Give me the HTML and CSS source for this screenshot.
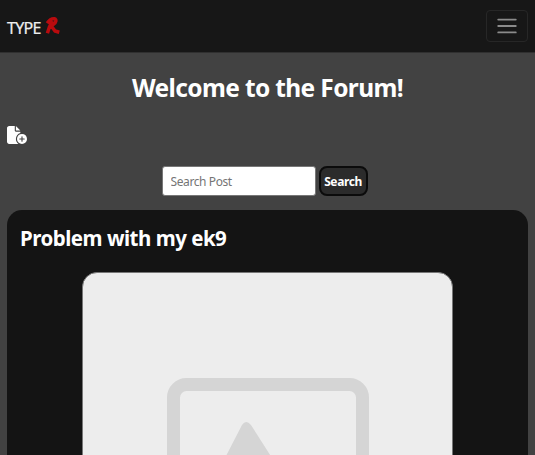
FILE: index.html
```html
<!DOCTYPE html>
<html lang="en">
<head>
<meta charset="utf-8">
<title>Type R Forum</title>
<link rel="stylesheet" href="styles.css">
</head>
<body>
<header class="navbar">
  <a class="brand"><span class="brand-text">TYPE</span>
    <svg class="brand-mark" width="16" height="20" viewBox="0 0 16 20"><path d="M2.200 7.200C4 4.500 7 2.500 9.300 2.700C12 3.200 11 6.600 8.500 8.200L5.500 10M7.400 5L4.400 11L2.400 17.200M6.300 10L10 15L14.300 16.300" fill="none" stroke="#b90b0e" stroke-width="3.500" stroke-linejoin="round"/></svg>
  </a>
  <button class="toggler" aria-label="Menu">
    <svg width="24" height="24" viewBox="0 0 30 30"><path d="M4 7h22M4 15h22M4 23h22" stroke="#8b8b8b" stroke-width="2.200" stroke-linecap="round"/></svg>
  </button>
</header>
<main>
  <h1>Welcome to the Forum!</h1>
  <a class="new-post">
    <svg width="20" height="18" viewBox="0 0 576 512" preserveAspectRatio="none"><path fill="#fff" d="M0 64C0 28.700 28.700 0 64 0H224V128c0 17.700 14.300 32 32 32H384v38.600C310.100 219.500 256 287.400 256 368c0 59.100 29.100 111.300 73.700 143.300c-3.200 .5-6.400 .7-9.700 .7H64c-35.300 0-64-28.700-64-64V64zm384 64H256V0L384 128zm48 96a144 144 0 1 1 0 288 144 144 0 1 1 0-288zm16 80c0-8.800-7.200-16-16-16s-16 7.200-16 16v48H368c-8.800 0-16 7.200-16 16s7.200 16 16 16h48v48c0 8.800 7.200 16 16 16s16-7.200 16-16V384h48c8.800 0 16-7.200 16-16s-7.200-16-16-16H448V304z"/></svg>
  </a>
  <form class="search">
    <input type="text" placeholder="Search Post">
    <button type="button">Search</button>
  </form>
  <article class="post">
    <h2>Problem with my ek9</h2>
    <div class="photo">
      <svg width="202" height="170" viewBox="0 0 202 170"><rect x="6.500" y="6.500" width="189" height="157" rx="13" fill="none" stroke="#d5d5d5" stroke-width="13"/><path d="M28 138L75 47Q79 41 84 47L121 105L132 92L174 138Z" fill="#d5d5d5"/></svg>
    </div>
  </article>
</main>
</body>
</html>
```
FILE: styles.css
```css
* { box-sizing: border-box; }
html, body { height: 100%; overflow: hidden; }
body { margin: 0; background: #424242; color: #fff; font-family: "Noto Sans", "Open Sans", sans-serif; }
.navbar { height: 53px; background: #171717; border-bottom: 1px solid #303030; display: flex; align-items: center; justify-content: space-between; padding: 0 7px; }
.brand { display: flex; align-items: center; gap: 4px; }
.brand-text { font-size: 16px; letter-spacing: -0.7px; color: #eee; padding-top: 3px; -webkit-text-stroke: 0.2px #eee; }
.toggler { width: 42px; height: 32px; padding: 0; border: 1px solid #272727; border-radius: 4px; background: none; display: grid; place-items: center; }
main { height: 402px; padding: 0 7px; overflow: hidden; }
h1 { margin: 17px 0 0; font-size: 24.5px; line-height: 36px; font-weight: 700; text-align: center; letter-spacing: -0.63px; }
.new-post { display: block; height: 19px; margin-top: 20px; }
.new-post svg { display: block; }
.search { display: flex; justify-content: center; gap: 3px; margin: 21px 6px 14px 0; }
.search input { width: 154px; height: 30px; padding: 0 8px; border: 1px solid #777; border-radius: 3px; background: #fff; font: 12px "Noto Sans", sans-serif; letter-spacing: -0.4px; }
.search input::placeholder { color: #757575; opacity: 1; }
.search button { width: 49px; height: 30px; padding: 0; border: 2px solid #0b0b0b; border-radius: 8px; background: #2b2b2b; color: #fff; font: 700 12px "Noto Sans", sans-serif; letter-spacing: -0.4px; }
.post { height: 500px; background: #141414; border-radius: 15px; padding: 12px 13px 0; }
h2 { margin: 0; font-size: 20.5px; line-height: 32px; font-weight: 700; letter-spacing: -0.5px; }
.photo { width: 371px; height: 371px; margin: 18px auto 0; border: 1px solid #777; border-radius: 15px; background: #ededed; display: flex; justify-content: center; padding-top: 105px; }
```
